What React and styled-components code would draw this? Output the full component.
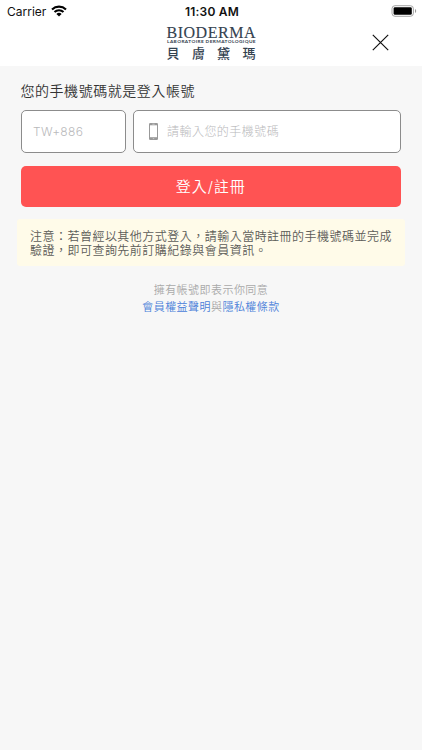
import React from "react";
import styled, { createGlobalStyle } from "styled-components";

const GlobalStyle = createGlobalStyle`
  * { box-sizing: border-box; }
  html, body { margin: 0; padding: 0; background: #f7f7f7; }
  body {
    font-family: Inter, "Noto Sans CJK TC", sans-serif;
    letter-spacing: 0.46px;
  }
`;

const Screen = styled.div`
  width: 100%;
  min-height: 750px;
  background: #f7f7f7;
`;

const Header = styled.header`
  height: 66px;
  background: #fff;
`;

const StatusBar = styled.div`
  height: 22px;
  display: grid;
  grid-template-columns: 1fr auto 1fr;
  align-items: center;
  padding: 0 5px 0 7px;
  color: #111;
  font-size: 12px;
  letter-spacing: 0;
`;

const Carrier = styled.div`
  display: flex;
  align-items: center;
  gap: 5px;
  letter-spacing: 0;
  svg { display: block; margin-top: -1px; }
`;

const Clock = styled.div`
  font-size: 12px;
  font-weight: 600;
  letter-spacing: 0.2px;
`;

const BatterySlot = styled.div`
  display: flex;
  justify-content: flex-end;
  margin-top: -1px;
`;

const NavBar = styled.div`
  height: 44px;
  display: grid;
  grid-template-columns: 1fr 92px 1fr;
  align-items: start;
`;

const Logo = styled.svg`
  grid-column: 2;
  display: block;
  fill: #34424f;
`;

const CloseButton = styled.button`
  justify-self: end;
  margin: 12px 33px 0 0;
  padding: 0;
  border: 0;
  background: none;
  svg { display: block; }
`;

const Form = styled.main`
  padding: 14px 17px 0;
`;

const Title = styled.h1`
  margin: 0 3.5px;
  height: 21px;
  line-height: 21px;
  font-size: 14px;
  font-weight: 350;
  letter-spacing: 0.54px;
  color: #333;
`;

const Fields = styled.div`
  display: flex;
  gap: 7px;
  margin: 9px 4px 0 3.5px;
`;

const Field = styled.label`
  flex: ${(p) => (p.$width ? `0 0 ${p.$width}px` : "1")};
  min-width: 0;
  height: 43px;
  display: flex;
  align-items: center;
  gap: 9.5px;
  padding: 0 0 0 ${(p) => p.$inset}px;
  border: 1px solid #8c8c8c;
  border-radius: 5px;
  background: #fff;
  svg { flex: none; display: block; }
`;

const Input = styled.input`
  flex: 1;
  min-width: 0;
  padding: 0;
  border: 0;
  outline: 0;
  background: none;
  font-family: inherit;
  font-size: 12px;
  font-weight: 300;
  letter-spacing: ${(p) => p.$tracking}px;
  color: #444;
  &::placeholder { color: #b9b9bb; opacity: 1; }
`;

const SubmitButton = styled.button`
  display: block;
  width: calc(100% - 7.5px);
  height: 41px;
  margin: 13px 4px 0 3.5px;
  padding: 0 0 2px;
  border: 0;
  border-radius: 5px;
  background: #ff5353;
  color: #fff;
  font-family: inherit;
  font-size: 15px;
  font-weight: 350;
  letter-spacing: 0.95px;
`;

const Notice = styled.p`
  margin: 12px 0 0;
  height: 47px;
  padding: 11px 0 0 13px;
  border-radius: 3px;
  background: #fffbe9;
  color: #5c5c58;
  font-size: 12px;
  font-weight: 350;
  line-height: 14.3px;
  letter-spacing: 0.48px;
  white-space: nowrap;
`;

const Terms = styled.p`
  margin: 16px 0 0;
  text-align: center;
  font-size: 11px;
  font-weight: 350;
  line-height: 17px;
  color: #a9a9a9;
`;

const TermsLink = styled.a`
  color: #4a80d9;
  text-decoration: none;
`;

const WifiIcon = () => (
  <svg width="16" height="12" viewBox="0 0 16 12">
    <g fill="none" stroke="#000" strokeWidth="2.1">
      <path d="M1 4.4A10.2 10.2 0 0 1 15 4.4" />
      <path d="M3.5 7A6.5 6.5 0 0 1 12.5 7" />
    </g>
    <path d="M8 11.6L5.4 9A3.8 3.8 0 0 1 10.6 9Z" />
  </svg>
);

const BatteryIcon = () => (
  <svg width="26" height="12" viewBox="0 0 26 12">
    <rect x="1" y="0.7" width="21.4" height="10.6" rx="3" fill="#fff" stroke="#a5a5a5" />
    <rect x="2.6" y="2.2" width="18.2" height="7.6" rx="1.4" fill="#000" />
    <path d="M24 4v4c1.6-.6 1.6-3.4 0-4z" fill="#999" />
  </svg>
);

const PhoneIcon = () => (
  <svg width="9" height="17" viewBox="0 0 9 17">
    <rect width="9" height="17" rx="1.3" fill="#999" />
    <rect x="1" y="2.3" width="7" height="11.9" fill="#fff" />
    <path d="M3.3 1.2h2.4M3.8 15.6h1.4" stroke="#ddd" strokeWidth=".7" />
  </svg>
);

const CloseIcon = () => (
  <svg width="17" height="17" viewBox="0 0 17 17">
    <path d="M.8.8l15.4 15.4M16.2.8L.8 16.2" stroke="#111" strokeWidth="1.2" />
  </svg>
);

const BrandLogo = () => (
  <Logo width="92" height="42" viewBox="0 0 92 42" letterSpacing="0">
    <text x="1.5" y="15.6" textLength="89.5" lengthAdjust="spacingAndGlyphs" fontFamily="Liberation Serif, serif" fontSize="15.8" letterSpacing="0.5" stroke="#34424f" strokeWidth=".12">BIODERMA</text>
    <text x="2" y="21.2" textLength="89" lengthAdjust="spacingAndGlyphs" fontFamily="Lato, sans-serif" fontWeight="700" fontSize="4.4" letterSpacing="0.35">LABORATOIRE DERMATOLOGIQUE</text>
    <text x="1.5 27 52 77.5" y="36.2" fontFamily="Noto Sans CJK TC, sans-serif" fontWeight="500" fontSize="13">貝膚黛瑪</text>
  </Logo>
);

export default function App() {
  return (
    <Screen lang="zh-Hant">
      <GlobalStyle />
      <Header>
        <StatusBar>
          <Carrier>Carrier<WifiIcon /></Carrier>
          <Clock>11:30 AM</Clock>
          <BatterySlot><BatteryIcon /></BatterySlot>
        </StatusBar>
        <NavBar>
          <BrandLogo />
          <CloseButton aria-label="關閉"><CloseIcon /></CloseButton>
        </NavBar>
      </Header>
      <Form>
        <Title>您的手機號碼就是登入帳號</Title>
        <Fields>
          <Field $width={105} $inset={11.5}>
            <Input placeholder="TW+886" $tracking={0.3} />
          </Field>
          <Field $inset={15}>
            <PhoneIcon />
            <Input placeholder="請輸入您的手機號碼" $tracking={0.46} />
          </Field>
        </Fields>
        <SubmitButton>登入/註冊</SubmitButton>
        <Notice>
          注意：若曾經以其他方式登入，請輸入當時註冊的手機號碼並完成
          <br />
          驗證，即可查詢先前訂購紀錄與會員資訊。
        </Notice>
        <Terms>
          擁有帳號即表示你同意
          <br />
          <TermsLink>會員權益聲明</TermsLink>與<TermsLink>隱私權條款</TermsLink>
        </Terms>
      </Form>
    </Screen>
  );
}
